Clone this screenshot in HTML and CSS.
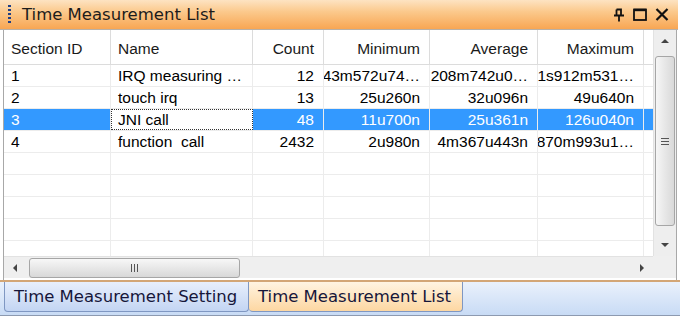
FILE: index.html
```html
<!DOCTYPE html>
<html lang="en">
<head>
  <meta charset="UTF-8">
  <title>Time Measurement List</title>
  <link rel="stylesheet" href="styles.css">
</head>
<body>
  <div class="panel">
    <div class="titlebar">
      <span class="grip"></span>
      <span class="title">Time Measurement List</span>
      <div class="title-icons">
        <svg width="12" height="14" viewBox="0 0 12 14"><path d="M3.5 1.5h4.5v5.5M3.5 1.5v5.5M1 7.5h10M6 7.5v6" stroke="#111" stroke-width="1.8" fill="none"/></svg>
        <svg width="14" height="13" viewBox="0 0 14 13"><rect x="1" y="1.5" width="12" height="10.5" stroke="#111" stroke-width="1.8" fill="none"/><path d="M1 2h12" stroke="#111" stroke-width="2.4"/></svg>
        <svg width="14" height="13" viewBox="0 0 14 13"><path d="M1.5 1l11 11M12.5 1l-11 11" stroke="#111" stroke-width="2.2" fill="none"/></svg>
      </div>
    </div>

    <div class="content">
      <div class="grid-area">
        <div class="table-view">
          <div class="row header">
            <div class="cell">Section ID</div>
            <div class="cell">Name</div>
            <div class="cell num">Count</div>
            <div class="cell num">Minimum</div>
            <div class="cell num">Average</div>
            <div class="cell num">Maximum</div>
            <div class="cell"></div>
          </div>
          <div class="row">
            <div class="cell">1</div>
            <div class="cell">IRQ measuring …</div>
            <div class="cell num">12</div>
            <div class="cell num">43m572u74…</div>
            <div class="cell num">208m742u0…</div>
            <div class="cell num">1s912m531…</div>
            <div class="cell"></div>
          </div>
          <div class="row">
            <div class="cell">2</div>
            <div class="cell">touch irq</div>
            <div class="cell num">13</div>
            <div class="cell num">25u260n</div>
            <div class="cell num">32u096n</div>
            <div class="cell num">49u640n</div>
            <div class="cell"></div>
          </div>
          <div class="row selected">
            <div class="cell">3</div>
            <div class="cell focus">JNI call</div>
            <div class="cell num">48</div>
            <div class="cell num">11u700n</div>
            <div class="cell num">25u361n</div>
            <div class="cell num">126u040n</div>
            <div class="cell"></div>
          </div>
          <div class="row">
            <div class="cell">4</div>
            <div class="cell keep">function  call</div>
            <div class="cell num">2432</div>
            <div class="cell num">2u980n</div>
            <div class="cell num">4m367u443n</div>
            <div class="cell num">870m993u1…</div>
            <div class="cell"></div>
          </div>
          <div class="row empty"><div class="cell"></div><div class="cell"></div><div class="cell"></div><div class="cell"></div><div class="cell"></div><div class="cell"></div><div class="cell"></div></div>
          <div class="row empty"><div class="cell"></div><div class="cell"></div><div class="cell"></div><div class="cell"></div><div class="cell"></div><div class="cell"></div><div class="cell"></div></div>
          <div class="row empty"><div class="cell"></div><div class="cell"></div><div class="cell"></div><div class="cell"></div><div class="cell"></div><div class="cell"></div><div class="cell"></div></div>
          <div class="row empty"><div class="cell"></div><div class="cell"></div><div class="cell"></div><div class="cell"></div><div class="cell"></div><div class="cell"></div><div class="cell"></div></div>
          <div class="row empty"><div class="cell"></div><div class="cell"></div><div class="cell"></div><div class="cell"></div><div class="cell"></div><div class="cell"></div><div class="cell"></div></div>
        </div>
        <div class="vscroll">
          <div class="btn"><span class="tri up"></span></div>
          <div class="vthumb"><span class="lines-h"></span></div>
          <div class="btn"><span class="tri down"></span></div>
        </div>
      </div>
      <div class="hscroll-row">
        <div class="hscroll">
          <div class="btn"><span class="tri left"></span></div>
          <div class="hthumb"><span class="lines-v"></span></div>
          <div class="htrack"></div>
          <div class="btn"><span class="tri right"></span></div>
        </div>
        <div class="corner"></div>
      </div>
    </div>

    <div class="tabstrip">
      <div class="tab setting">Time Measurement Setting</div>
      <div class="tab active">Time Measurement List</div>
    </div>
  </div>
</body>
</html>
```

FILE: styles.css
```css
* {
  margin: 0;
  padding: 0;
  box-sizing: border-box;
}

body {
  background: #fff;
  font-family: 'Liberation Sans', Arial, sans-serif;
}

.panel {
  width: 678px;
}

/* title bar */
.titlebar {
  height: 30px;
  display: flex;
  align-items: center;
  background: linear-gradient(to bottom, #fde3c2 0%, #fbc98c 40%, #f8a653 100%);
  border-bottom: 1px solid #b9b0a6;
  padding-left: 8px;
}

.grip {
  width: 3px;
  height: 20px;
  margin-right: 11px;
  background: repeating-linear-gradient(to bottom, #1f3f86 0 2px, transparent 2px 4px);
}

.title {
  font-family: 'DejaVu Sans', sans-serif;
  font-size: 16.5px;
  color: #1c1c1c;
  flex: 1;
}

.title-icons {
  display: flex;
  align-items: center;
  gap: 8px;
  padding-right: 9px;
}

/* grid */
.content {
  margin-left: 3px;
  width: 674px;
  border-left: 1px solid #a8a8a8;
  border-right: 1px solid #a8a8a8;
  background: #fff;
  padding-bottom: 2px;
}

.grid-area {
  display: flex;
  height: 226px;
}

.table-view {
  width: 649px;
  overflow: hidden;
}

.row {
  display: grid;
  grid-template-columns: 107px 142px 71px 106px 108px 106px 9px;
  height: 22px;
  border-bottom: 1px solid #ececec;
  font-size: 15.5px;
  color: #000;
}

.row.header {
  height: 35px;
  border-bottom: 1px solid #dcdcdc;
  color: #1a1a1a;
}

.cell {
  border-right: 1px solid #ececec;
  padding: 1px 9px 0 7px;
  display: flex;
  align-items: center;
  white-space: nowrap;
  overflow: hidden;
}

.header .cell {
  border-right-color: #dcdcdc;
  padding-top: 3px;
}

.cell.num {
  justify-content: flex-end;
}

.cell.keep {
  white-space: pre;
}

.row.selected .cell {
  background: #3399ff;
  color: #fff;
}

.row.selected .cell.focus {
  background: #fff;
  color: #000;
  border: 1px dotted #333;
  padding-left: 6px;
}

/* scrollbars */
.vscroll {
  width: 23px;
  background: #eeeeee;
  display: flex;
  flex-direction: column;
  border-left: 1px solid #e2e2e2;
}

.btn {
  width: 22px;
  height: 22px;
  display: flex;
  align-items: center;
  justify-content: center;
  flex: none;
}

.vthumb {
  margin: 4px 1px 0 1px;
  height: 170px;
  border: 1px solid #a6a6a6;
  border-radius: 3px;
  background: linear-gradient(to right, #f6f6f6, #e4e4e4 60%, #d9d9d9);
  display: flex;
  align-items: center;
  justify-content: center;
}

.vscroll .btn:last-child {
  margin-top: auto;
}

.lines-h {
  width: 8px;
  height: 7px;
  background: repeating-linear-gradient(to bottom, #555 0 1px, transparent 1px 3px);
}

.lines-v {
  width: 7px;
  height: 8px;
  background: repeating-linear-gradient(to right, #555 0 1px, transparent 1px 3px);
}

.tri {
  width: 0;
  height: 0;
  border: 4px solid transparent;
}

.tri.up { border-bottom: 4px solid #444; border-top: 0; }
.tri.down { border-top: 4px solid #444; border-bottom: 0; }
.tri.left { border-right: 4px solid #444; border-left: 0; }
.tri.right { border-left: 4px solid #444; border-right: 0; }

.hscroll-row {
  display: flex;
  height: 22px;
}

.hscroll {
  width: 649px;
  display: flex;
  align-items: center;
  background: #efefef;
  border-top: 1px solid #e2e2e2;
}

.hthumb {
  width: 211px;
  height: 20px;
  margin-left: 3px;
  border: 1px solid #a6a6a6;
  border-radius: 3px;
  background: linear-gradient(to bottom, #f7f7f7, #e6e6e6 55%, #d8d8d8);
  display: flex;
  align-items: center;
  justify-content: center;
}

.htrack {
  flex: 1;
}

.corner {
  width: 23px;
  background: #efefef;
}

/* tabs */
.tabstrip {
  width: 680px;
  height: 36px;
  border-top: 2px solid #d3a676;
  border-bottom: 1px solid #8d9ab0;
  background: linear-gradient(to bottom, #eaf1fc, #c8dbf5);
  display: flex;
  align-items: flex-start;
  padding-left: 4px;
  font-family: 'DejaVu Sans', sans-serif;
  font-size: 16.5px;
  color: #16163a;
}

.tab {
  height: 30px;
  padding: 0 9px 0 9px;
  display: flex;
  align-items: center;
  border: 1px solid #7f97c2;
  border-top: 0;
  border-radius: 0 0 4px 4px;
}

.tab.setting {
  width: 245px;
  background: linear-gradient(to bottom, #e8effc, #c3d5f3);
}

.tab.active {
  width: 214px;
  background: linear-gradient(to bottom, #fff4e2, #fdd7a2);
  border-left: 0;
}
```
